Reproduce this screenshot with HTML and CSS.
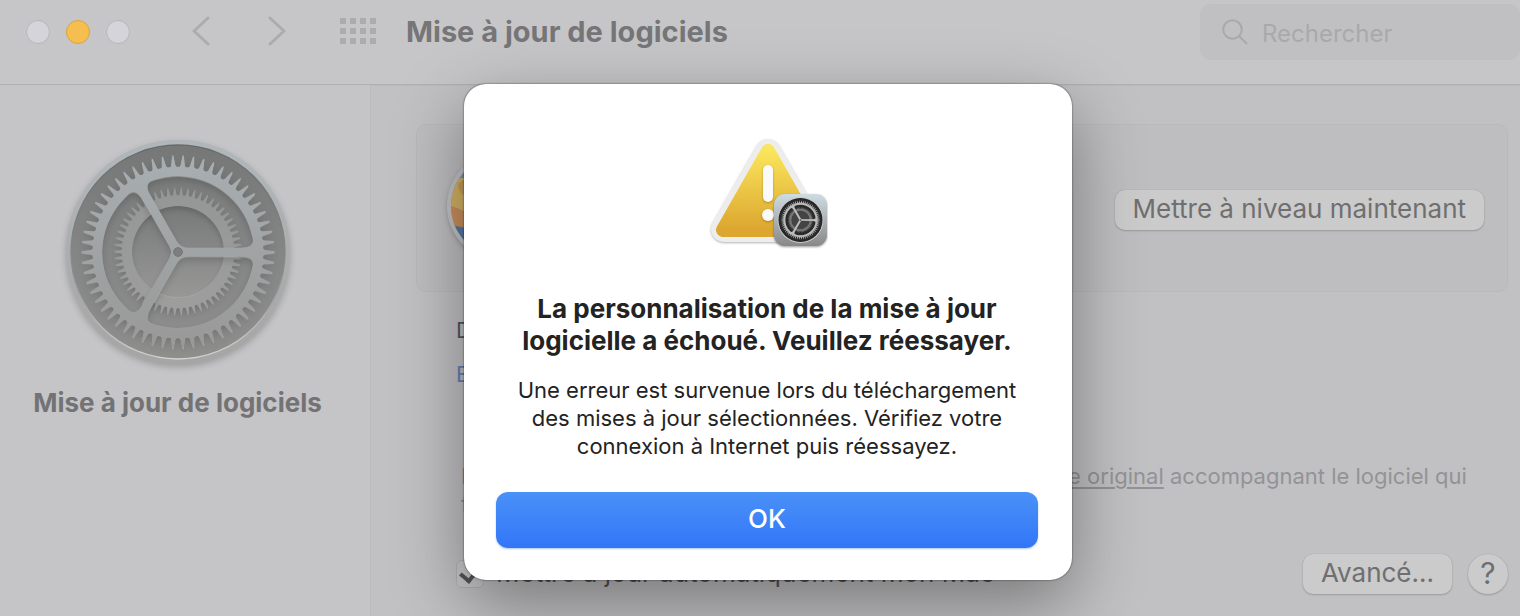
FILE: index.html
```html
<!DOCTYPE html>
<html lang="fr">
<head>
<meta charset="utf-8">
<title>Mise à jour de logiciels</title>
<link rel="stylesheet" href="styles.css">
</head>
<body>
<svg class="defs" aria-hidden="true">
  <defs>
    <linearGradient id="rimFill" x1="0" y1="0" x2="0" y2="1"><stop offset="0" stop-color="#b0b7ba"/><stop offset="1" stop-color="#a6a5a4"/></linearGradient>
    <linearGradient id="wellFill" x1="0" y1="0" x2="0" y2="1"><stop offset="0" stop-color="#757877"/><stop offset=".5" stop-color="#848585"/><stop offset="1" stop-color="#8f8f8e"/></linearGradient>
    <linearGradient id="frontFill" x1="0" y1="0" x2="0" y2="1"><stop offset="0" stop-color="#a8afb2"/><stop offset="1" stop-color="#989897"/></linearGradient>
    <linearGradient id="backFill" x1="0" y1="0" x2="0" y2="1"><stop offset="0" stop-color="#929595"/><stop offset="1" stop-color="#a0a09f"/></linearGradient>
    <linearGradient id="coreFill" x1="0" y1="0" x2="0" y2="1"><stop offset="0" stop-color="#777979"/><stop offset="1" stop-color="#989897"/></linearGradient>
    <linearGradient id="badgeFill" x1="0" y1="0" x2="0" y2="1"><stop offset="0" stop-color="#cfdce2"/><stop offset="1" stop-color="#888888"/></linearGradient>
    <linearGradient id="edgeFill" x1="0" y1="0" x2="0" y2="1"><stop offset="0" stop-color="#666a6a"/><stop offset=".6" stop-color="#8b8d8d"/><stop offset="1" stop-color="#d3d3d3"/></linearGradient>
    <linearGradient id="warnFill" x1="0" y1="0" x2="0" y2="1"><stop offset="0" stop-color="#fae55c"/><stop offset="1" stop-color="#dca62f"/></linearGradient>
    <path id="t1" d="M-12-254Q-7-256-6-262L-2-288Q0-293 2-288L6-262Q7-256 12-254Z"/>
    <g id="t2"><use href="#t1"/><use href="#t1" transform="rotate(6.2069)"/></g>
    <g id="t4"><use href="#t2"/><use href="#t2" transform="rotate(12.4138)"/></g>
    <g id="t8"><use href="#t4"/><use href="#t4" transform="rotate(24.8276)"/></g>
    <g id="t16"><use href="#t8"/><use href="#t8" transform="rotate(49.6552)"/></g>
    <g id="t29"><use href="#t16"/><use href="#t8" transform="rotate(99.3103)"/><use href="#t4" transform="rotate(148.9655)"/><use href="#t1" transform="rotate(173.7931)"/></g>
    <g id="teeth" transform="rotate(3.1034)"><use href="#t29"/><use href="#t29" transform="rotate(180)"/></g>
    <path id="opening" d="M30-13H185C222-13 232-25 221-55A228 228 0 0 0-63-219C-94-213-100-199-81-167L-4-33Q8-13 30-13Z"/>
    <mask id="frontMask" maskUnits="userSpaceOnUse" x="-340" y="-340" width="680" height="680">
      <g fill="#fff"><circle r="256"/><use href="#teeth"/></g>
      <g fill="#000"><use href="#opening"/><use href="#opening" transform="rotate(120)"/><use href="#opening" transform="rotate(240)"/></g>
    </mask>
    <mask id="backMask" maskUnits="userSpaceOnUse" x="-340" y="-340" width="680" height="680">
      <g fill="#fff"><circle r="168"/><use href="#teeth" transform="scale(.66)"/></g>
      <circle r="138" fill="#000"/>
    </mask>
    <g id="gear">
      <circle class="gear-well" r="319"/>
      <circle class="gear-core" r="140"/>
      <g class="gear-back"><rect x="-300" y="-300" width="600" height="600" mask="url(#backMask)"/></g>
      <g class="gear-front"><rect x="-300" y="-300" width="600" height="600" mask="url(#frontMask)"/></g>
      <circle class="gear-hub" r="13"/>
    </g>
  </defs>
</svg>

<div class="window">
  <header class="toolbar">
    <div class="lights"><span class="light"></span><span class="light light-on"></span><span class="light"></span></div>
    <nav class="nav">
      <button class="icon-button" aria-label="Précédent"><svg width="18" height="30" viewBox="0 0 18 30"><path class="chevron" d="M16 2 2 15l14 13"/></svg></button>
      <button class="icon-button" aria-label="Suivant"><svg width="18" height="30" viewBox="0 0 18 30"><path class="chevron" d="m2 2 14 13L2 28"/></svg></button>
    </nav>
    <button class="icon-button" aria-label="Tout afficher"><svg width="36" height="26" viewBox="0 0 36 26"><path class="grid-dots" d="M3 3h.01M13 3h.01M23 3h.01M33 3h.01M3 13h.01M13 13h.01M23 13h.01M33 13h.01M3 23h.01M13 23h.01M23 23h.01M33 23h.01"/></svg></button>
    <h1 class="title">Mise à jour de logiciels</h1>
    <label class="search"><svg width="26" height="26" viewBox="0 0 26 26"><circle cx="10.500" cy="10.500" r="9.300"/><path d="m17.500 17.500 7 7"/></svg><input type="search" aria-label="Rechercher" placeholder="Rechercher"></label>
  </header>

  <div class="main">
    <aside class="sidebar">
      <svg class="gear-large" viewBox="-345 -345 690 690" aria-hidden="true">
        <circle r="337" fill="url(#rimFill)"/>
        <circle r="320" fill="none" stroke="url(#edgeFill)" stroke-width="6"/>
        <use href="#gear"/>
      </svg>
      <p class="pane-name">Mise à jour de logiciels</p>
    </aside>

    <main class="content">
      <section class="panel">
        <svg class="os-icon" viewBox="0 0 112 112" aria-hidden="true">
          <defs><clipPath id="osClip"><circle cx="56" cy="56" r="51"/></clipPath></defs>
          <circle cx="56" cy="56" r="55" fill="#c3c3c5"/>
          <g clip-path="url(#osClip)"><path fill="#6f97bf" d="M0 0h112v112H0z"/><path fill="#d3b264" d="M0 28h40l40 20v40H0z"/><path fill="#c79c58" d="M12 34q8-8 20-4v20q-20-2-20-16z"/><path fill="#cb8f5c" d="M0 55q14 2 40 18v9H0z"/><path fill="#5478a8" d="M0 74q20 4 50 10v30H0z"/></g>
        </svg>
        <button class="button">Mettre à niveau maintenant</button>
      </section>
      <div class="details">
        <p class="available">Détail</p>
        <a class="more" href="#infos">Extra</a>
        <p class="licence">L’utilisation de ce logiciel est associée au <a href="#licence">contrat de licence original</a> accompagnant le logiciel qui<br>fait l’objet de la mise à jour.</p>
      </div>
      <footer class="options">
        <label class="auto"><input type="checkbox" checked><span>Mettre à jour automatiquement mon Mac</span></label>
        <button class="button">Avancé...</button>
        <button class="button help" aria-label="Aide">?</button>
      </footer>
    </main>
  </div>

  <div class="overlay">
    <section class="alert" role="alertdialog" aria-modal="true" aria-labelledby="alert-title" aria-describedby="alert-text">
      <svg class="warning" viewBox="0 0 120 112" aria-hidden="true">
        <path class="warning-edge" d="M60 14 16 91h88z"/>
        <path d="M60 13 15 92h90z" fill="url(#warnFill)" stroke="url(#warnFill)" stroke-width="14" stroke-linejoin="round"/>
        <g class="mark"><rect x="55" y="27" width="10" height="37" rx="5"/><circle cx="60" cy="77" r="6"/></g>
        <g class="badge">
          <rect x="66" y="56" width="53" height="52" rx="11" fill="url(#badgeFill)"/>
          <g transform="translate(92.500 82) scale(.067)"><circle r="342" fill="#c7cccf"/><circle r="328" fill="#222"/><use class="gear-dark" href="#gear"/></g>
        </g>
      </svg>
      <h2 class="alert-title" id="alert-title">La personnalisation de la mise à jour<br>logicielle a échoué. Veuillez réessayer.</h2>
      <p class="alert-text" id="alert-text">Une erreur est survenue lors du téléchargement<br>des mises à jour sélectionnées. Vérifiez votre<br>connexion à Internet puis réessayez.</p>
      <button class="ok">OK</button>
    </section>
  </div>
</div>
</body>
</html>
```
FILE: styles.css
```css
* { box-sizing: border-box; }
body { margin: 0; font-family: Inter, "Liberation Sans", sans-serif; font-size: 22px; color: #57575a; }
h1, h2, p { margin: 0; }
button, input { font: inherit; color: inherit; }
.defs { position: absolute; width: 0; height: 0; }

.window { position: relative; display: flex; flex-direction: column; min-height: 100vh; overflow: hidden; background: #c1c1c3; }

.toolbar { display: flex; align-items: flex-start; height: 85px; padding: 4px 0 0 26px; background: #c6c6c8; border-bottom: 1px solid #b0b0b2; box-shadow: 0 1px 1px #bbbbbd; }
.toolbar > * { height: 56px; display: flex; align-items: center; }
.lights { gap: 16px; }
.light { width: 24px; height: 24px; border-radius: 50%; background: #d5d4db; border: 1px solid #b7b6bd; }
.light-on { background: #f6be4f; border-color: #dba33c; }
.nav { gap: 58px; margin: 0 54px 0 62px; }
.icon-button { display: flex; padding: 0 0 2px; border: 0; background: none; }
.chevron { fill: none; stroke: #acacae; stroke-width: 3; stroke-linecap: round; stroke-linejoin: round; }
.grid-dots { stroke: #acacae; stroke-width: 6; stroke-linecap: square; }
.title { margin-left: 30px; padding-bottom: 2px; font-size: 29px; font-weight: 700; color: #767678; }
.search { margin-left: auto; width: 320px; padding-left: 22px; gap: 14px; border-radius: 10px; background: #c0c0c2; }
.search svg { flex: none; fill: none; stroke: #a9a9ab; stroke-width: 2; stroke-linecap: round; }
.search input { min-width: 0; flex: 1; padding: 2px 0 0; border: 0; outline: 0; background: none; font-size: 24px; }
.search input::placeholder { color: #a9a9ab; opacity: 1; }

.main { flex: 1; display: flex; }
.sidebar { width: 371px; padding: 52px 15px 0 0; display: flex; flex-direction: column; align-items: center; background: #c5c5c7; border-right: 1px solid #bcbcbe; }
.gear-large { width: 230px; height: 230px; filter: drop-shadow(0 3px 3px rgba(0, 0, 0, .2)); }
.pane-name { margin-top: 20px; font-size: 26px; line-height: 32px; font-weight: 700; color: #737375; white-space: nowrap; }

.gear-well { fill: var(--well, url(#wellFill)); }
.gear-core { fill: var(--core, url(#coreFill)); }
.gear-back { fill: var(--back, url(#backFill)); filter: drop-shadow(0 -2px 0 rgba(255, 255, 255, .2)) drop-shadow(0 10px 8px rgba(0, 0, 0, .15)); }
.gear-front { fill: var(--front, url(#frontFill)); filter: drop-shadow(0 2px 1px rgba(255, 255, 255, .35)) drop-shadow(0 12px 10px rgba(0, 0, 0, .15)); }
.gear-hub { fill: var(--hub, #7d7f7f); stroke: #737575; stroke-width: 3; }
.gear-dark { --well: #292929; --core: #444; --back: #777; --front: #bbb; --hub: #444; }

.content { flex: 1; min-width: 0; display: flex; flex-direction: column; padding: 39px 12px 22px 45px; }
.panel { display: flex; justify-content: space-between; align-items: center; height: 168px; padding: 0 23px 0 29px; border: 1px solid #b9b9bb; border-radius: 10px; background: #bebec0; }
.os-icon { width: 112px; height: 112px; margin-bottom: 4px; filter: drop-shadow(0 2px 2px rgba(0, 0, 0, .2)); }
.button { height: 40px; padding: 0 18px 2px; border: 0; border-radius: 10px; background: #cbcbcb; color: #6f6f70; font-size: 26px; line-height: 38px; white-space: nowrap; box-shadow: 0 0 1px #999, 0 1px 2px rgba(0, 0, 0, .2); }
.panel .button { margin-top: 4px; }
.details { display: flex; flex-direction: column; align-items: flex-start; padding: 24px 0 0 40px; }
.available, .more { line-height: 28px; }
.more { margin: 16px 0 74px; color: #6380b8; text-decoration: none; }
.licence { padding-left: 5px; line-height: 28px; color: #939395; white-space: nowrap; }
.licence a { color: inherit; text-underline-offset: 3px; text-decoration-thickness: 2px; }
.options { display: flex; align-items: center; gap: 16px; margin-top: auto; padding-left: 40px; }
.auto { display: flex; align-items: center; gap: 12px; margin-right: auto; font-size: 26px; line-height: 28px; }
.auto span { padding-bottom: 3px; }
.auto input { appearance: none; display: grid; place-items: center; width: 28px; height: 28px; margin: 0; border: 1px solid #b3b3b5; border-radius: 6px; background: #c8c8ca; }
.auto input:checked::before { content: ""; width: 9px; height: 16px; margin-bottom: 4px; border: solid #555; border-width: 0 4px 4px 0; transform: rotate(40deg); }
.help { width: 40px; padding: 0 0 2px; border-radius: 50%; font-size: 30px; }

.overlay { position: absolute; inset: 0; display: flex; justify-content: center; align-items: flex-start; padding: 84px 0 0 16px; }
.alert { width: 608px; padding: 50px 34px 32px 32px; display: flex; flex-direction: column; align-items: center; border-radius: 22px; background: #fff; color: #232323; text-align: center; box-shadow: 0 0 2px rgba(0, 0, 0, .7), 0 24px 70px rgba(0, 0, 0, .38); }
.warning { width: 120px; height: 112px; margin: 4px 0 0 2px; }
.warning-edge { fill: #ededed; stroke: #ededed; stroke-width: 26px; stroke-linejoin: round; filter: drop-shadow(0 1px 1px rgba(0, 0, 0, .3)); }
.mark { fill: #fafafa; filter: drop-shadow(0 1px 1px rgba(130, 90, 0, .5)); }
.badge { filter: drop-shadow(0 1px 1px rgba(0, 0, 0, .4)); }
.alert-title { margin-top: 43px; font-size: 26px; line-height: 32px; font-weight: 700; white-space: nowrap; }
.alert-text { margin: 19px 0 32px; font-size: 22px; line-height: 28px; white-space: nowrap; }
.ok { align-self: stretch; height: 56px; padding-bottom: 4px; border: 0; border-radius: 12px; background: linear-gradient(#4a91f8, #3276f7); color: #fff; font-size: 26px; font-weight: 500; box-shadow: 0 1px 2px rgba(50, 118, 247, .4); }
```
